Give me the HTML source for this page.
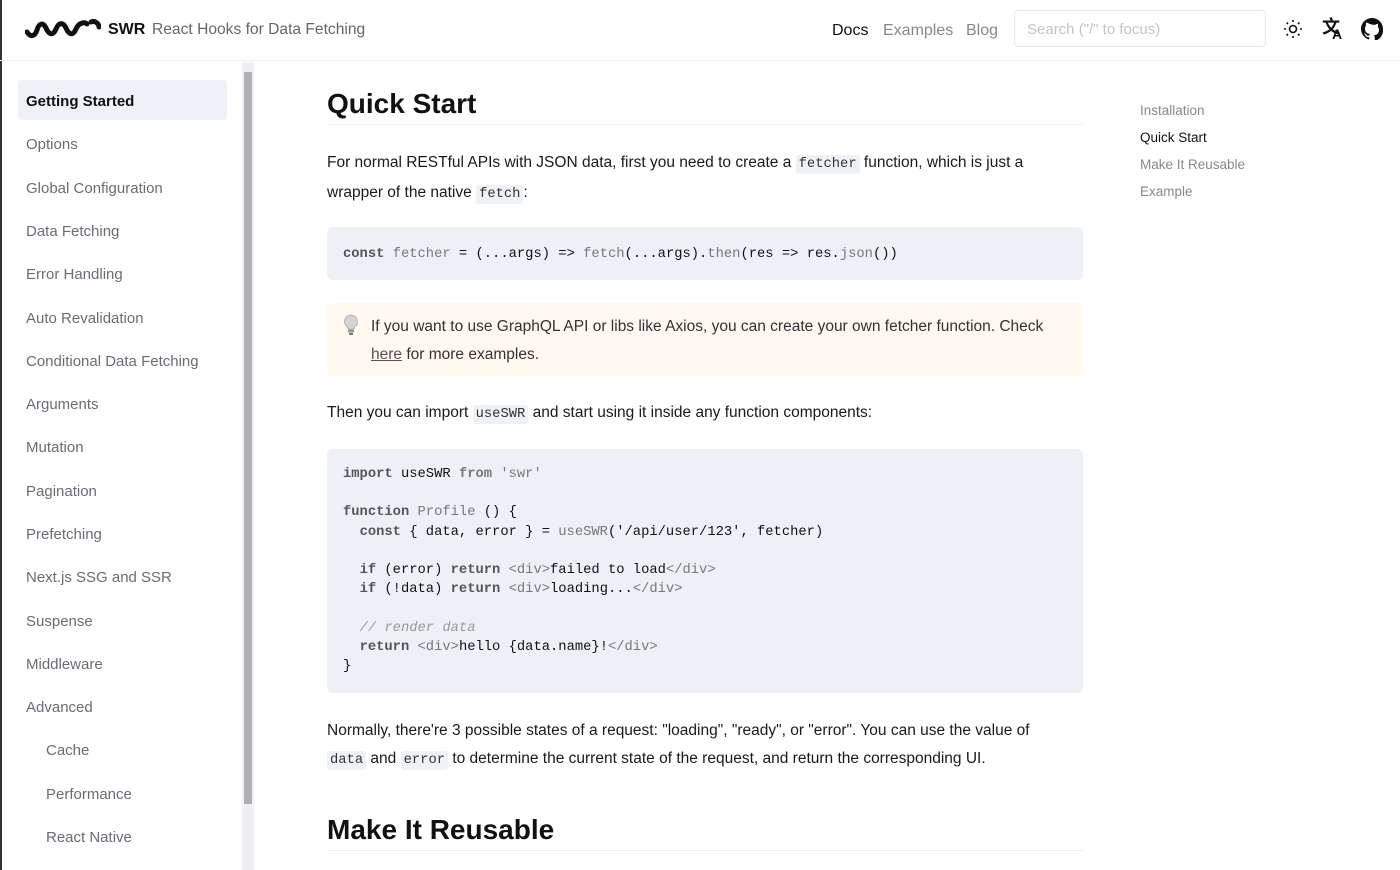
<!DOCTYPE html>
<html><head><meta charset="utf-8"><style>
*{box-sizing:border-box;margin:0;padding:0}
body{width:1400px;height:870px;overflow:hidden;background:#fff;font-family:"Liberation Sans",sans-serif;color:#111;position:relative}
.edge{position:absolute;left:0;top:0;width:2px;height:870px;background:#333}
header{position:absolute;left:0;top:0;width:1400px;height:61px;border-bottom:1px solid #eef0f3}
.logo{position:absolute;left:25px;top:18px}
.brand{position:absolute;left:108px;top:21px;font-size:16px;font-weight:bold}
.tag{position:absolute;left:152px;top:21px;font-size:15.6px;color:#666}
.nav{position:absolute;top:22px;font-size:16px;color:#888}
.search{position:absolute;left:1014px;top:10px;width:252px;height:37px;border:1px solid #e6e8ec;border-radius:4px;padding:10px 12px;font-size:15px;color:#c4c4c8}
.active{position:absolute;left:18px;top:80px;width:209px;height:40px;background:#eef1f5;border-radius:4px}
.si{position:absolute;left:26px;font-size:15px;color:#6b6b75}
.sb{position:absolute;left:242px;top:62px;width:12px;height:808px;background:#eef0f3}
.thumb{position:absolute;left:244px;top:72px;width:8px;height:732px;background:#b0b0b4}
.main{position:absolute;left:327px;width:756px}
.pw{width:722px}
h1{font-size:28px;font-weight:bold;color:#111}
.hr{position:absolute;left:327px;width:756px;height:1px;background:#eceef1}
p{font-size:15.5px;line-height:27.5px;color:#1a1a1a}
code{font-family:"Liberation Mono",monospace;font-size:13.8px;background:#eef1f5;padding:2px 3px;border-radius:3px;color:#333}
pre{font-family:"Liberation Mono",monospace;font-size:13.8px;line-height:19.2px;background:#edf1f5;border-radius:6px;color:#111}
.k{color:#555;font-weight:bold}.g{color:#777}.c{color:#999;font-style:italic}
.call{background:#fff9ef;border-radius:6px}
.toc{position:absolute;left:1140px;font-size:13.5px;color:#888}
</style></head><body>
<div class="edge"></div>
<header>
<svg class="logo" width="76" height="22" viewBox="0 0 76 22"><path d="M2 14 C6 20 10 18 12 12 C14 5 18 4 21 10 C24 17 28 18 31 11 C34 4 38 4 41 10 C44 17 48 18 51 11 C54 4 60 4 62 6 M66 4 C70 2 74 6 74 9" fill="none" stroke="#111" stroke-width="5" stroke-linecap="round"/></svg>
<div class="brand">SWR</div><div class="tag">React Hooks for Data Fetching</div>
<div class="nav" style="left:832px;color:#111">Docs</div>
<div class="nav" style="left:883px">Examples</div>
<div class="nav" style="left:966px">Blog</div>
<div class="search">Search ("/" to focus)</div>
<svg style="position:absolute;left:1283px;top:19px" width="20" height="20" viewBox="0 0 20 20" fill="none" stroke="#111" stroke-width="1.6"><circle cx="10" cy="10" r="3.5"/><path d="M10 1v2M10 17v2M1 10h2M17 10h2M3.6 3.6l1.4 1.4M15 15l1.4 1.4M3.6 16.4l1.4-1.4M15 5l1.4-1.4"/></svg>
<div style="position:absolute;left:1322px;top:16px;font-size:18px;font-weight:bold;font-family:'Noto Sans CJK SC',sans-serif;line-height:20px">文</div>
<div style="position:absolute;left:1332px;top:26px;font-size:14px;font-weight:bold">A</div>
<svg style="position:absolute;left:1361px;top:18px" width="22" height="22" viewBox="0 0 16 16"><path fill="#111" d="M8 0C3.58 0 0 3.58 0 8c0 3.54 2.29 6.530 5.47 7.59.4.07.55-.17.55-.38v-1.33c-2.23.48-2.7-1.07-2.7-1.07-.36-.93-.89-1.17-.89-1.17-.73-.5.06-.49.06-.49.8.06 1.23.83 1.23.83.71 1.23 1.87.87 2.33.66.07-.52.28-.87.51-1.07-1.78-.2-3.64-.89-3.64-3.95 0-.87.31-1.59.82-2.150-.08-.2-.36-1.02.08-2.12 0 0 .67-.21 2.2.82A7.6 7.6 0 0 1 8 4.84c.68 0 1.36.09 2 .27 1.53-1.04 2.2-.82 2.2-.82.44 1.1.16 1.92.08 2.12.51.56.82 1.27.82 2.15 0 3.07-1.87 3.75-3.65 3.95.29.25.54.73.54 1.48v2.2c0 .21.15.46.55.38A8 8 0 0 0 16 8c0-4.42-3.58-8-8-8z"/></svg>
</header>
<div class="active"></div>
<div class="si" style="top:93px;color:#111;font-weight:bold">Getting Started</div>
<div class="si" style="top:136px">Options</div>
<div class="si" style="top:180px">Global Configuration</div>
<div class="si" style="top:223px">Data Fetching</div>
<div class="si" style="top:266px">Error Handling</div>
<div class="si" style="top:310px">Auto Revalidation</div>
<div class="si" style="top:353px">Conditional Data Fetching</div>
<div class="si" style="top:396px">Arguments</div>
<div class="si" style="top:439px">Mutation</div>
<div class="si" style="top:483px">Pagination</div>
<div class="si" style="top:526px">Prefetching</div>
<div class="si" style="top:569px">Next.js SSG and SSR</div>
<div class="si" style="top:613px">Suspense</div>
<div class="si" style="top:656px">Middleware</div>
<div class="si" style="top:699px">Advanced</div>
<div class="si" style="top:742px;left:46px">Cache</div>
<div class="si" style="top:786px;left:46px">Performance</div>
<div class="si" style="top:829px;left:46px">React Native</div>
<div class="sb"></div><div class="thumb"></div>

<h1 class="main" style="top:88px">Quick Start</h1>
<div class="hr" style="top:124px"></div>
<p class="main pw" style="top:149px">For normal RESTful APIs with JSON data, first you need to create a <code>fetcher</code> function, which is just a wrapper of the native <code>fetch</code>:</p>
<pre class="main" style="top:227px;height:53px;padding:18px 16px"><span class="k">const</span> <span class="g">fetcher</span> = (...args) =&gt; <span class="g">fetch</span>(...args).<span class="g">then</span>(res =&gt; res.<span class="g">json</span>())</pre>
<div class="main call" style="top:303px;height:73px"></div>
<svg style="position:absolute;left:343px;top:314px" width="16" height="22" viewBox="0 0 16 22"><path d="M8 1a6.5 6.5 0 0 0-4 11.6c.8.8 1 1.6 1 2.4h6c0-.8.2-1.6 1-2.4A6.5 6.5 0 0 0 8 1z" fill="#d4d4d8" stroke="#aaa" stroke-width=".8"/><rect x="5" y="15.5" width="6" height="3" fill="#999"/><rect x="6" y="19" width="4" height="2" fill="#777"/></svg>
<p style="position:absolute;left:371px;top:313px;width:700px;color:#333">If you want to use GraphQL API or libs like Axios, you can create your own fetcher function. Check <span style="color:#555;text-decoration:underline">here</span> for more examples.</p>
<p class="main" style="top:399px">Then you can import <code>useSWR</code> and start using it inside any function components:</p>
<pre class="main" style="top:449px;height:244px;padding:16px 16px"><span class="k">import</span> useSWR <span class="k g">from</span> <span class="g">'swr'</span>

<span class="k">function</span> <span class="g">Profile</span> () {
  <span class="k">const</span> { data, error } = <span class="g">useSWR</span>('/api/user/123', fetcher)

  <span class="k">if</span> (error) <span class="k">return</span> <span class="g">&lt;div&gt;</span>failed to load<span class="g">&lt;/div&gt;</span>
  <span class="k">if</span> (!data) <span class="k">return</span> <span class="g">&lt;div&gt;</span>loading...<span class="g">&lt;/div&gt;</span>

  <span class="c">// render data</span>
  <span class="k">return</span> <span class="g">&lt;div&gt;</span>hello {data.name}!<span class="g">&lt;/div&gt;</span>
}</pre>
<p class="main pw" style="top:717px">Normally, there're 3 possible states of a request: "loading", "ready", or "error". You can use the value of <code>data</code> and <code>error</code> to determine the current state of the request, and return the corresponding UI.</p>
<h1 class="main" style="top:814px">Make It Reusable</h1>
<div class="hr" style="top:850px"></div>

<div class="toc" style="top:103px">Installation</div>
<div class="toc" style="top:130px;color:#111">Quick Start</div>
<div class="toc" style="top:157px">Make It Reusable</div>
<div class="toc" style="top:184px">Example</div>
</body></html>
